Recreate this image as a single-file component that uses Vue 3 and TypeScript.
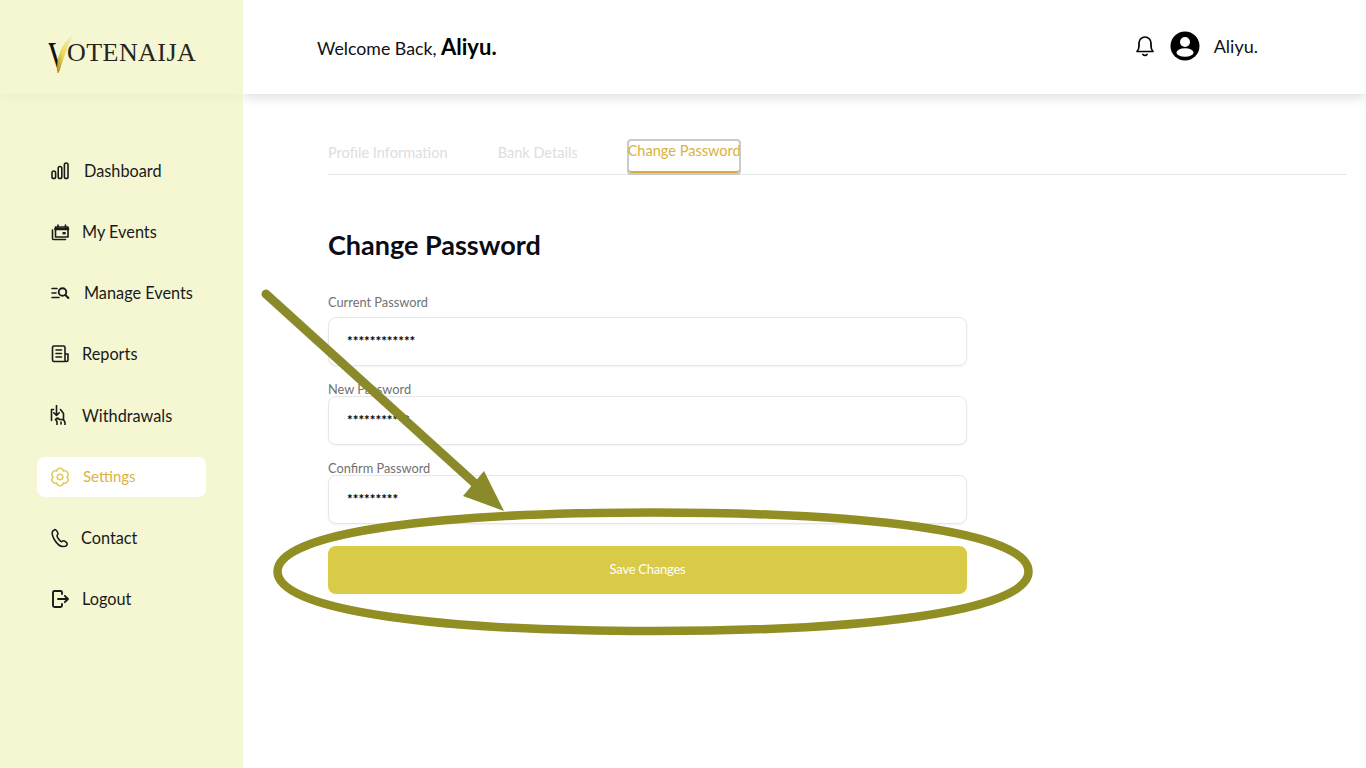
<script setup lang="ts">
const menu = [
  { label: 'Dashboard', icon: 'dashboard', cls: 'g-14' },
  { label: 'My Events', icon: 'events', cls: 'g-12' },
  { label: 'Manage Events', icon: 'manage', cls: 'g-14' },
  { label: 'Reports', icon: 'reports', cls: 'g-12' },
  { label: 'Withdrawals', icon: 'withdraw', cls: 'g-12 flat' },
  { label: 'Settings', icon: 'settings', cls: 'g-13 push active' },
  { label: 'Contact', icon: 'contact', cls: 'g-11' },
  { label: 'Logout', icon: 'logout', cls: 'g-12' }
]

const fields = [
  { label: 'Current Password', value: '************', first: true },
  { label: 'New Password', value: '***********', first: false },
  { label: 'Confirm Password', value: '*********', first: false }
]
</script>

<template>
  <div class="page">
    <aside class="sidebar">
      <div class="brand">
        <div class="logo">
          <span class="logo-v">V</span><span class="logo-rest">OTENAIJA</span>
          <svg class="logo-swoosh" viewBox="0 0 30 44" aria-hidden="true">
            <defs>
              <linearGradient id="sw" x1="0" y1="1" x2="1" y2="0">
                <stop offset="0" stop-color="#a88a14" />
                <stop offset="0.4" stop-color="#e8da5c" />
                <stop offset="1" stop-color="#f3f3d2" />
              </linearGradient>
            </defs>
            <path d="M4.500 41 C2.500 28 8 11 21 2 C14.500 13 10.500 28 5.500 41 Z" fill="url(#sw)" />
          </svg>
        </div>
      </div>
      <nav class="menu">
        <a v-for="item in menu" :key="item.label" class="menu-item" :class="item.cls">
          <svg class="menu-icon" viewBox="0 0 20 20" fill="none" stroke="currentColor" stroke-width="1.600" stroke-linecap="round" stroke-linejoin="round" aria-hidden="true">
            <template v-if="item.icon === 'dashboard'">
              <rect x="2" y="10" width="3.600" height="7.500" rx="1.800" />
              <rect x="8.200" y="5.500" width="3.600" height="12" rx="1.800" />
              <rect x="14.400" y="2" width="3.600" height="15.500" rx="1.800" />
            </template>
            <template v-else-if="item.icon === 'events'">
              <path d="M5.500 5h12.500v10h-12.500z" />
              <path d="M5.500 7h12.500" stroke-width="2.600" />
              <path d="M8 3v2M15.500 3v2" />
              <path d="M2.500 8v8.500a1 1 0 0 0 1 1H15.500" />
              <rect x="12.500" y="10" width="3.200" height="2.400" fill="currentColor" stroke="none" />
            </template>
            <template v-else-if="item.icon === 'manage'">
              <path d="M2 5.500h5M2 10h4M2 14.500h7" />
              <circle cx="12.500" cy="9" r="3.800" stroke-width="1.900" />
              <path d="M15.400 12l3 3" stroke-width="2.100" />
            </template>
            <template v-else-if="item.icon === 'reports'">
              <path d="M15 17.500H4a1.500 1.500 0 0 1-1.500-1.500V3.500A1.500 1.500 0 0 1 4 2h9.500A1.500 1.500 0 0 1 15 3.500V16a1.500 1.500 0 0 0 3 0v-6h-3" />
              <path d="M6 6h5.500M6 9.500h5.500M6 13h5.500" />
            </template>
            <template v-else-if="item.icon === 'withdraw'">
              <path d="M1.500 15.500V4.500H3.500" />
              <path d="M6.500 0.500V10.500M3.800 7.800 6.500 10.500 9.200 7.800" />
              <path d="M10.500 4.500 13.500 8.500V15" />
              <path d="M7 19.500V16.500L5.500 14.500 7.500 13 9.500 14.500H12C13.500 14.500 14.500 15.500 15 17.500V19.500" />
              <path d="M11 19v-2" />
            </template>
            <template v-else-if="item.icon === 'settings'">
              <circle cx="10" cy="10" r="2.800" />
              <path d="M16.800 10A3.450 3.450 0 0 1 13.400 15.900 3.450 3.450 0 0 1 6.600 15.900 3.450 3.450 0 0 1 3.200 10 3.450 3.450 0 0 1 6.600 4.100 3.450 3.450 0 0 1 13.400 4.100 3.450 3.450 0 0 1 16.800 10Z" />
            </template>
            <template v-else-if="item.icon === 'contact'">
              <path d="M5 1.500 3 2.800C1.500 4.500 2.300 8 4.300 11.500c2.300 3.800 5.500 7 8.700 7 2.300 0 4.200-1.200 4.200-2.800 0-.8-2.700-3-3.700-3-.9 0-1.200 1-2 1-1.300 0-4.500-4.500-4.500-6 0-.8 1-1 1-2C8 4.500 6 1.500 5 1.500z" />
            </template>
            <template v-else>
              <path d="M12 5V3.500A1.500 1.500 0 0 0 10.500 2h-6A1.500 1.500 0 0 0 3 3.500v13A1.500 1.500 0 0 0 4.500 18h6a1.500 1.500 0 0 0 1.500-1.500V15" stroke-width="1.900" />
              <path d="M8 10h10M14.800 6.800 18 10l-3.200 3.200" stroke-width="1.900" />
            </template>
          </svg>
          <span>{{ item.label }}</span>
        </a>
      </nav>
    </aside>

    <div class="main">
      <header class="topbar">
        <p class="welcome">Welcome Back, <strong>Aliyu.</strong></p>
        <div class="user">
          <svg class="bell" viewBox="0 0 20 22" fill="none" stroke="#000" stroke-width="1.700" stroke-linecap="round" stroke-linejoin="round" aria-hidden="true">
            <path d="M2 16.500c1.500-1.500 2-2.500 2-5.500V8a6 6 0 0 1 12 0v3c0 3 .5 4 2 5.500z" />
            <path d="M8 19.500c1 1.200 3 1.200 4 0" />
          </svg>
          <svg class="avatar" viewBox="0 0 30 30" aria-hidden="true">
            <circle cx="15" cy="15" r="14.500" fill="#000" />
            <circle cx="15" cy="11" r="5" fill="#fff" />
            <ellipse cx="15" cy="21.500" rx="8.500" ry="4.300" fill="#fff" />
          </svg>
          <span class="user-name">Aliyu.</span>
        </div>
      </header>

      <main class="content">
        <div class="tabs">
          <span class="tab">Profile Information</span>
          <span class="tab">Bank Details</span>
          <span class="tab tab-active">Change Password</span>
        </div>
        <h1 class="title">Change Password</h1>
        <form class="form" @submit.prevent>
          <div v-for="f in fields" :key="f.label" class="field">
            <label class="label" :class="{ 'label-first': f.first }">{{ f.label }}</label>
            <div class="input">{{ f.value }}</div>
          </div>
          <button class="save" type="submit">Save Changes</button>
        </form>
      </main>
    </div>

    <svg class="annotation" viewBox="0 0 1366 768" aria-hidden="true">
      <path d="M266 294 L480 488" stroke="#8a8a2b" stroke-width="9" stroke-linecap="round" fill="none" />
      <path d="M484 471 L463 496 L504 511 Z" fill="#8a8a2b" />
      <path d="M277.500 571.500 C277.500 531 446 512.500 653 512.500 C860 512.500 1028.500 531 1028.500 571.500 C1028.500 612 860 631 653 631 C446 631 277.500 612 277.500 571.500 Z" fill="none" stroke="#918e24" stroke-width="8.500" />
    </svg>
  </div>
</template>

<style scoped>
.page {
  position: relative;
  display: flex;
  width: 1366px;
  height: 768px;
  overflow: hidden;
  background: #fff;
  font-family: Lato, "Open Sans", sans-serif;
  color: #111;
}
.sidebar {
  width: 243px;
  flex-shrink: 0;
  background: #f5f7d3;
  display: flex;
  flex-direction: column;
}
.brand {
  height: 94px;
  box-shadow: 0 4px 10px rgba(0, 0, 0, 0.03);
  clip-path: inset(0 0 -20px 0);
  padding: 36px 0 0 47px;
  box-sizing: border-box;
}
.logo {
  position: relative;
  display: flex;
  align-items: flex-start;
  font-family: "Liberation Serif", serif;
  color: #25251c;
}
.logo-v {
  display: block;
  width: 30px;
  margin-right: -10px;
  font-size: 42px;
  line-height: 42px;
  color: #14140f;
  transform: scaleX(0.75);
  transform-origin: left center;
  clip-path: polygon(0 0, 16px 0, 19px 100%, 12px 100%);
}
.logo-rest {
  font-size: 26px;
  line-height: 30px;
  letter-spacing: 0.45px;
  margin-top: 2px;
}
.logo-swoosh {
  position: absolute;
  left: 6px;
  top: -4px;
  width: 30px;
  height: 44px;
}
.menu {
  display: flex;
  flex-direction: column;
  gap: 21px;
  padding: 57px 37px 0;
}
.menu-item {
  display: flex;
  align-items: center;
  width: 169px;
  height: 40px;
  box-sizing: border-box;
  padding-left: 13px;
  border-radius: 8px;
  font-size: 16.300px;
  color: #1a1a1a;
}
.menu-item span { margin-top: -2px; }
.menu-item.flat span { margin-top: 0; }
.menu-item.g-11 { gap: 11px; }
.menu-item.g-12 { gap: 12px; }
.menu-item.g-13 { gap: 13px; }
.menu-item.g-14 { gap: 14px; }
.menu-item.push { margin-top: 1px; }
.menu-item.active {
  background: #fff;
  color: #dfcb5e;
}
.menu-item.active span {
  color: #dcb342;
  font-size: 15px;
}
.menu-icon { width: 20px; height: 20px; flex-shrink: 0; }
.main { flex: 1; min-width: 0; }
.topbar {
  position: relative;
  height: 94px;
  box-sizing: border-box;
  display: flex;
  align-items: center;
  justify-content: space-between;
  padding: 0 108px 0 74px;
  background: #fff;
  box-shadow: 0 2px 12px rgba(0, 0, 0, 0.16);
  clip-path: inset(0 0 -20px 0);
}
.welcome { margin: 0 0 2px; font-size: 17.750px; color: #111; }
.welcome strong { font-size: 22px; font-weight: 700; color: #000; }
.user { display: flex; align-items: center; margin-top: -2px; }
.bell { width: 20px; height: 22px; margin-right: 15px; }
.avatar { width: 30px; height: 30px; margin-right: 14px; }
.user-name { font-size: 18px; color: #111; }
.content { padding: 44px 19px 0 85px; }
.tabs {
  display: flex;
  gap: 50px;
  height: 36px;
  border-bottom: 1px solid #e5e7eb;
}
.tab {
  font-size: 14.550px;
  line-height: 29px;
  color: #dedede;
}
.tab-active {
  color: #d9b23f;
  box-sizing: border-box;
  width: 114px;
  height: 36px;
  margin: 1px 0 0 -1px;
  border: 2px solid #c8ccd0;
  border-radius: 4px;
  box-shadow: inset 0 -2px 0 #d8ad3c;
  line-height: 20px;
  text-indent: -1px;
  white-space: nowrap;
}
.title {
  margin: 52px 0 0;
  font-size: 27px;
  line-height: 36px;
  font-weight: 700;
  color: #0b0b14;
}
.form { width: 639px; display: flex; flex-direction: column; }
.field { display: flex; flex-direction: column; }
.label {
  font-size: 12.800px;
  line-height: 16px;
  color: #717171;
  margin-top: 15px;
  margin-bottom: -1px;
}
.label-first { margin-top: 31px; margin-bottom: 7px; }
.input {
  height: 49px;
  box-sizing: border-box;
  padding: 0 18px;
  line-height: 47px;
  border: 1px solid #e5e7eb;
  border-radius: 8px;
  box-shadow: 0 1px 2px rgba(0, 0, 0, 0.05);
  background: #fff;
  font-size: 13.400px;
  font-weight: 700;
  color: #000;
}
.save {
  height: 48px;
  margin-top: 22px;
  padding-bottom: 3px;
  border: none;
  border-radius: 8px;
  background: #d9ca47;
  color: #fff;
  font-family: inherit;
  font-size: 13px;
  letter-spacing: -0.250px;
}
.annotation {
  position: absolute;
  inset: 0;
  width: 1366px;
  height: 768px;
  pointer-events: none;
}
</style>
